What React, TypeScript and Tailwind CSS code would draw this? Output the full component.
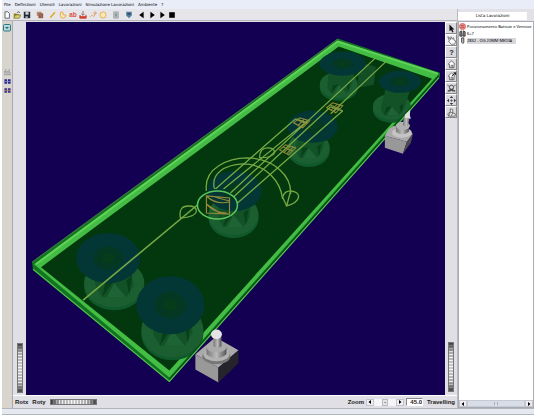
import { useState } from 'react'
import type { ReactNode } from 'react'
import clsx from 'clsx'

type Tool = { name: string; icon: ReactNode; wide?: boolean }

const menus = ['File', 'Definizioni', 'Utensili', 'Lavorazioni', 'Simulazione Lavorazioni', 'Ambiente', '?']

// All toolbar drawings share a 10x10 box
const tools: Tool[] = [
  { name: 'New', icon: <path d="M2.500 1h3.500l2 2v6h-5.500z" fill="#fff" stroke="#445" /> },
  { name: 'Open', icon: <><path d="M1 9V3h3l1 1h3v5z" fill="#8a8420" /><path d="M1 9l2-4h7L8 9z" fill="#d6d070" stroke="#5b5a20" strokeWidth=".6" /><path d="M5 2q2-2 3.500 0" fill="none" stroke="#333" /></> },
  { name: 'Save', icon: <><path d="M1 1h8v8H1z" fill="#202830" /><path d="M3 1.500h4v3H3z" fill="#d8dce4" /><path d="M3 6.500h3V9H3z" fill="#aab" /></>, wide: true },
  { name: 'Copy', icon: <><path d="M1 1h6v5H1z" fill="#b08a70" /><path d="M3 3h6v6H3z" fill="#9a5a44" /><path d="M4 4l4 4" stroke="#8a7fa0" /></>, wide: true },
  { name: 'Line', icon: <path d="M1.500 8.500l6-7" stroke="#e0a428" strokeWidth="1.800" /> },
  { name: 'Contour', icon: <path d="M2 1.500h3v3l4 1Q8 9 5 9T1.500 6z" fill="#f7e7b4" stroke="#e2a03a" /> },
  { name: 'Text', icon: <text x="5" y="8" fontSize="8" fontWeight="700" textAnchor="middle" fill="#d8523c">ab</text> },
  { name: 'Import', icon: <><path d="M5 0v5M3 3.500l2 2 2-2" stroke="#7d4f5c" fill="none" /><path d="M1 5.500v3.500h8V5.500L7 7H3z" fill="#d0402c" stroke="#d0402c" /></> },
  { name: 'Edit', icon: <><path d="M1 8l3-3 2 2 3-5" stroke="#e5a86e" fill="none" strokeWidth="1.200" /><circle cx="7.500" cy="2.500" r="1.500" fill="none" stroke="#de9b6b" /></> },
  { name: 'Circle', icon: <circle cx="5" cy="5" r="3.800" fill="#fbe9bb" stroke="#e3a238" />, wide: true },
  { name: 'Panel', icon: <><path d="M2 1h6v8H2z" fill="#b6bcc0" stroke="#a2a9ad" /><path d="M4 3h2v4H4z" fill="#7d928c" /></>, wide: true },
  { name: 'Shield', icon: <><path d="M1.500 1h7v4.500L5 9 1.500 5.500z" fill="#51819c" /><path d="M3 2.500h4v2.500H3z" fill="#3a4d70" /></>, wide: true },
  { name: 'Back', icon: <path d="M7 1v8L1.500 5z" /> },
  { name: 'Step', icon: <path d="M3 1v8L8.500 5z" /> },
  { name: 'Play', icon: <path d="M3 1v8L8.500 5z" /> },
  { name: 'Stop', icon: <path d="M1.500 1.500h7v7h-7z" /> },
]

const home = <path d="M1.500 5L5.500 1l4 4-1 .5V9.500H3V5.500zM5 9.500V6.500h2v3" fill="#fff" stroke="#333" strokeWidth=".8" />

// Viewer buttons use an 11x11 box
const viewTools: Tool[] = [
  { name: 'Select', icon: <path d="M3 .5v8.500l2-1.700 1.500 3.200 1.500-.7L6.500 6.800H9z" fill="#111" /> },
  { name: 'Rotate', icon: <path d="M1 1l2 1 1 2.500L5 1l1.500 3L8 2l.5 3 2 1-1 4H5L2 6.500l1-.5z" fill="#fff" stroke="#444" strokeWidth=".8" /> },
  { name: 'Help', icon: <text x="5.500" y="9" fontSize="9" fontWeight="700" textAnchor="middle" fill="#222">?</text> },
  { name: 'Home', icon: home },
  { name: 'Set home', icon: <>{home}<path d="M6 5l4.500-4M10.500 1v2.500M10.500 1H8" stroke="#111" fill="none" strokeWidth="1.200" /></> },
  { name: 'View all', icon: <><circle cx="5.500" cy="4" r="2.600" fill="none" stroke="#333" /><path d="M.5 1.500l2 1M10.500 1.500l-2 1M1 10l2.500-3.500h4L10 10M1 8h9M3 10l2-3M8 10L6 7" stroke="#333" strokeWidth=".8" fill="none" /></> },
  { name: 'Seek', icon: <><path d="M5.500 0l2 2.500h-4zM5.500 11l2-2.500h-4zM0 5.500l2.500-2v4zM11 5.500l-2.500-2v4z" fill="#333" /><path d="M4 5.500h3M5.500 4v3" stroke="#555" /></> },
  { name: 'Perspective', icon: <path d="M4 1l3 1v4l3 1v3H2L1 7l3-2zM4 5l3 1M2 10l2-5M7 6L5 10" fill="#eee" stroke="#444" strokeWidth=".8" /> },
]

type Cup = { x: number; y: number; rx: number; ry: number; bx: number; by: number; brx: number; bry: number }

const cups: Cup[] = [
  { x: 108, y: 258, rx: 32, ry: 25, bx: 114, by: 285, brx: 30, bry: 24 },
  { x: 170, y: 305, rx: 34, ry: 29, bx: 172, by: 332, brx: 31, bry: 27 },
  { x: 234, y: 191, rx: 27, ry: 20, bx: 233, by: 217, brx: 25, bry: 20 },
  { x: 312, y: 127, rx: 25, ry: 16, bx: 308, by: 150, brx: 21, bry: 16 },
  { x: 342, y: 64, rx: 23, ry: 12, bx: 338, by: 87, brx: 19, bry: 13 },
  { x: 399, y: 82, rx: 21, ry: 11, bx: 391, by: 109, brx: 19, bry: 13 },
]

function SuctionCup({ x, y, rx, ry, bx, by, brx, bry }: Cup) {
  return (
    <g>
      <ellipse cx={bx} cy={by + 1} rx={brx} ry={bry} fill="#10592a" />
      <ellipse cx={bx} cy={by - 2} rx={brx} ry={bry} fill="#1b5f31" />
      <path d={`M${x - rx * 0.6} ${y}L${bx - brx * 0.6} ${by + bry * 0.1}L${bx - brx * 0.4} ${by + bry * 0.5}L${bx + brx * 0.4} ${by + bry * 0.5}L${bx + brx * 0.65} ${by}L${x + rx * 0.6} ${y}z`} fill="#135227" />
      <path d={`M${bx - brx * 0.4} ${by + bry * 0.5}l${brx * 0.1} ${-bry * 0.6}l${brx * 0.3} ${-bry * 0.1}zM${bx + brx * 0.5} ${by + bry * 0.4}l${-brx * 0.1} ${-bry * 0.6}l${brx * 0.2} ${-bry * 0.2}z`} fill="#07411a" />
      <path d={`M${bx - brx * 0.25} ${by + bry * 0.5}L${bx} ${by - 2}L${bx + brx * 0.4} ${by + bry * 0.5}z`} fill="#1d6334" />
      <ellipse cx={x} cy={y} rx={rx} ry={ry} fill="#033735" />
      <ellipse cx={x} cy={y} rx={rx * 0.46} ry={ry * 0.46} fill="#043823" />
      <ellipse cx={x} cy={y} rx={rx * 0.2} ry={ry * 0.2} fill="#053c1a" />
    </g>
  )
}

function Hatch({ x, y }: { x: number; y: number }) {
  return (
    <path
      d={`M${x - 7} ${y - 1}l6-5 10 3-7 7zM${x - 4} ${y - 4}l10 4M${x - 3} ${y + 2}l7-7M${x} ${y + 3}l7-7`}
      stroke="#948c3a"
      fill="none"
    />
  )
}

function Scene() {
  return (
    <svg viewBox="26 22 418 373" preserveAspectRatio="xMidYMid slice" className="absolute inset-0 h-full w-full">
      <defs>
        <linearGradient id="metal" x1="0" x2="1">
          <stop offset="0" stopColor="#777" />
          <stop offset=".5" stopColor="#bbb" />
          <stop offset="1" stopColor="#555" />
        </linearGradient>
      </defs>
      <path d="M32 262L337 39L439 73L439 77L169 381L33 270z" fill="#127321" />
      <path d="M34 264L337 41L438 74L169 377z" fill="#43bd43" />
      <path d="M41 267L338 47L431 79L169 370z" fill="#03380e" />
      <path d="M358 62l17 5-2 18-16 3z" fill="#124f25" />
      {cups.map((cup) => <SuctionCup key={cup.x} {...cup} />)}
      <path d="M33 269L169 381L438 78" fill="none" stroke="#58c653" strokeWidth="1.200" />
      <path d="M32 262L337 39.500" fill="none" stroke="#3e7940" />
      <path d="M36 264L337 42L437 74" fill="none" stroke="#62d35a" strokeWidth="1.800" />
      <path d="M169 379L438 76" stroke="#064b10" />

      {/* milling paths */}
      <g fill="none" stroke="#76a844" strokeWidth="1.300">
        <path d="M83 300L197 205" strokeWidth="1.600" />
        <path d="M215 189L295 119M223 189L307 121M230 193L375 58M233 197L330 107M237 203L342 111M330 114L385 62" />
        <path d="M206 191C203 168 228 158 247 158C275 159 291 177 290 194M214 189C210 173 225 165 242 164C266 164 280 182 282 199" />
        <path d="M180 218Q178 206 188 206Q196 206 196 211Q195 217 180 218" />
        <path d="M286 206L282 197Q284 191 290 191Q298 192 298 197Q297 203 286 206L290 191" />
        <path d="M259 158Q259 148 267 148Q274 148 274 153Q272 158 259 158" />
        <path d="M295 119l12 4M330 107l12 4" />
      </g>
      <Hatch x={300} y={124} />
      <Hatch x={286} y={151} />
      <Hatch x={333} y={109} />
      <ellipse cx="217" cy="205" rx="20" ry="14" fill="none" stroke="#5cc65c" strokeWidth="1.500" />
      <path d="M206 196L229 198L229 214L206 213zM206 196Q215 205 229 202M206 204Q213 213 226 213M206 204L219 213M214 197L229 201" fill="none" stroke="#94883a" strokeWidth="1.200" />

      {/* clamp by the front edge */}
      <path d="M195 354L215 337L238 350L218 367z" fill="#aaa" />
      <path d="M195 354L218 367V382L195 369z" fill="#999" />
      <path d="M218 367L238 350V363L218 382z" fill="#25232b" />
      <ellipse cx="216" cy="356" rx="14" ry="8" fill="#777" />
      <ellipse cx="216" cy="354" rx="13" ry="7" fill="#b3b3b3" />
      <path d="M206 347v7q10 8 20 0v-7z" fill="url(#metal)" />
      <ellipse cx="216" cy="347" rx="10" ry="5" fill="#aaa" />
      <path d="M213 336h8v10q-4 3-8 0z" fill="url(#metal)" />
      <ellipse cx="216" cy="334" rx="5.500" ry="4.800" fill="#e4e4e4" />

      {/* clamp by the right edge */}
      <path d="M388 129L393 126L412 134L406 142L384 136z" fill="#aaa" />
      <path d="M384 136L406 142L402 154L384 148z" fill="#989898" />
      <path d="M406 142L412 134L410 143L402 154z" fill="#4c4a50" />
      <ellipse cx="401" cy="133" rx="10" ry="5" fill="#c4c4c4" />
      <path d="M395 126v6q6 5 13 0v-6z" fill="url(#metal)" />
      <ellipse cx="402" cy="126" rx="7" ry="4" fill="#b0b0b0" />
      <path d="M403 116l6 1-2 9q-3 2-5-1z" fill="url(#metal)" />
      <path d="M404 115l5-5v6l1 3-6-1z" fill="#ddd" />
    </svg>
  )
}

function ArrowButton({ name, flip }: { name: string; flip?: boolean }) {
  return (
    <button type="button" aria-label={name} className="flex h-[7px] w-2 shrink-0 items-center justify-center border border-[#c4c4cc] bg-[#f0f0f4]">
      <svg viewBox="0 0 4 4" className={clsx('size-1', flip && 'rotate-180')}><path d="M3 0v4L.5 2z" /></svg>
    </button>
  )
}

const wheel = 'appearance-none border border-[#777] [&::-webkit-slider-thumb]:size-0 [&::-webkit-slider-thumb]:appearance-none'
const verticalWheel = 'h-[50px] w-1.5 bg-[image:linear-gradient(#222c,#9990_20%,#fff6_50%,#9990_80%,#222c),repeating-linear-gradient(#aaa_0_2px,#eee_2px_3px)] [writing-mode:vertical-lr]'

export default function App() {
  const [zoom, setZoom] = useState('45.0')
  const [viewTool, setViewTool] = useState('Rotate')

  return (
    <div className="h-screen w-full bg-white pr-1 pb-1 pl-0.5 font-['Liberation_Sans',Arial,sans-serif] text-black">
      <div className="flex h-full flex-col bg-[#e1e1e7]">
        <nav className="flex h-[9px] shrink-0 items-center gap-1 bg-[#e9edf8] pl-0.5 font-['DejaVu_Sans',sans-serif] text-[4px] leading-[8px]">
          {menus.map((menu) => <button key={menu} type="button">{menu}</button>)}
        </nav>

        <div className="flex min-h-0 flex-1">
          <div className="flex min-w-0 flex-1 flex-col">
            <div className="flex h-[12px] shrink-0 items-center gap-0.5 border-b border-[#b5b5bb] bg-[#e6e5e9] pl-px">
              {tools.map((tool) => (
                <button key={tool.name} type="button" aria-label={tool.name} className={clsx('size-2 shrink-0', tool.wide && 'mr-[3px]')}>
                  <svg viewBox="0 0 10 10" className="size-full">{tool.icon}</svg>
                </button>
              ))}
            </div>

            <div className="flex min-h-0 flex-1">
              <aside className="flex w-[11px] shrink-0 flex-col items-center border-r border-[#aaa9ab] bg-[#d8d5cf] pt-[3px]">
                <button type="button" aria-label="View" className="size-2">
                  <svg viewBox="0 0 8 8" className="size-full"><rect x=".5" y=".5" width="7" height="6.500" rx="1" fill="#b8d8dc" stroke="#287982" /><path d="M2 3h4L4 5z" fill="#1d6773" /></svg>
                </button>
                <div className="mt-[37px] flex flex-col gap-0.5">
                  <button type="button" aria-label="Layers" className="size-[7px]">
                    <svg viewBox="0 0 8 8" className="size-full"><path d="M2 0v3H0M6 0v3H3M0 4.500h8M0 6.500h8" stroke="#92929c" fill="none" /></svg>
                  </button>
                  <button type="button" aria-label="Split" className="size-[7px]">
                    <svg viewBox="0 0 8 8" className="size-full"><path d="M.5 1.500h3v5h-3zM4.500 1.500h3v5h-3z" fill="#27278d" /><path d="M0 4h8" stroke="#8585c5" /></svg>
                  </button>
                  <button type="button" aria-label="Pieces" className="size-[7px]">
                    <svg viewBox="0 0 8 8" className="size-full"><path d="M.5 1.500h3v5h-3zM4.500 1.500h3v5h-3z" fill="#3b3486" /><path d="M0 4h8" stroke="#c08080" /></svg>
                  </button>
                </div>
              </aside>

              <div className="flex min-w-0 flex-1 flex-col bg-[#dfdfe5] pt-px">
                <div className="flex min-h-0 flex-1">
                  <div className="flex w-[13px] shrink-0 items-end justify-center pb-0.5">
                    <input id="rotx" type="range" className={clsx(wheel, verticalWheel)} />
                  </div>
                  <main className="relative min-w-0 flex-1 overflow-hidden bg-[#130052]"><Scene /></main>
                  <div className="flex w-[12px] shrink-0 flex-col items-center justify-between pb-[3px]">
                    <div className="flex w-full flex-col">
                      {viewTools.map((tool) => (
                        <button
                          key={tool.name}
                          type="button"
                          aria-label={tool.name}
                          onClick={() => setViewTool(tool.name)}
                          className={clsx(
                            'flex h-[12px] w-full items-center justify-center border border-t-white border-r-[#888] border-b-[#888] border-l-white',
                            viewTool === tool.name ? 'bg-[#eeeef2]' : 'bg-[#d9d9df]',
                          )}
                        >
                          <svg viewBox="0 0 11 11" className="size-[9px]">{tool.icon}</svg>
                        </button>
                      ))}
                    </div>
                    <input id="travelling" type="range" className={clsx(wheel, verticalWheel)} />
                  </div>
                </div>

                <div className="flex h-[13px] shrink-0 items-center border-t border-white pl-0.5 text-[6px] leading-[8px] font-bold text-[#222]">
                  <label htmlFor="rotx">Rotx</label>
                  <label htmlFor="roty" className="ml-1">Roty</label>
                  <input id="roty" type="range" className={clsx(wheel, 'ml-1 h-1.5 w-[47px] bg-[image:linear-gradient(90deg,#222c,#9990_20%,#fff6_50%,#9990_80%,#222c),repeating-linear-gradient(90deg,#aaa_0_2px,#eee_2px_3px)]')} />
                  <div className="ml-auto flex items-center">
                    <label htmlFor="zoom">Zoom</label>
                    <div className="ml-0.5 flex w-[38px] items-center justify-between bg-[#f5f5f8]">
                      <ArrowButton name="Zoom out" />
                      <button type="button" aria-label="Zoom position" className="h-[7px] w-1.5 border border-[#bbb] bg-[#e4e4ea] text-[5px] leading-[4px]">-</button>
                      <ArrowButton name="Zoom in" flip />
                    </div>
                    <input
                      id="zoom"
                      value={zoom}
                      onChange={(e) => setZoom(e.target.value)}
                      className="ml-0.5 h-2 w-[17px] border border-t-[#888] border-r-white border-b-white border-l-[#888] bg-white text-right"
                    />
                    <label htmlFor="travelling" className="mr-0.5 ml-1">Travelling</label>
                  </div>
                </div>
              </div>
            </div>
          </div>

          <section className="flex w-[77px] shrink-0 flex-col border-l border-[#b8b8be] pt-[3px]">
            <h2 className="mr-[7px] h-[8px] shrink-0 bg-white text-center font-['DejaVu_Sans',sans-serif] text-[4px] leading-[8px]">Lista Lavorazioni</h2>
            <div className="mt-px flex min-h-0 flex-1 flex-col border border-[#aaaab2] bg-white">
              <ul className="flex-1 pt-px font-['Noto_Sans',sans-serif] text-[4px] leading-[6px] whitespace-nowrap">
                <li className="flex items-center gap-px">
                  <svg viewBox="0 0 8 8" className="size-[7px] shrink-0"><circle cx="4" cy="4" r="3.500" fill="#e5938d" stroke="#d26762" /><path d="M2 3h4M2 5h4" stroke="#b54d4d" /></svg>
                  Posizionamento Battute e Ventose
                </li>
                <li className="flex items-center gap-px">
                  <svg viewBox="0 0 8 8" className="size-[7px] shrink-0"><path d="M1 2l2-1 .5 6H1zM5 1l2 1v5H4.500z" fill="#888" stroke="#333" /></svg>
                  6+7
                </li>
                <li className="flex items-center gap-px">
                  <svg viewBox="0 0 8 8" className="size-[7px] shrink-0"><path d="M3 1h2.500v5L4.500 7.500 3 6z" fill="#ccc" stroke="#333" /></svg>
                  <span className="bg-[#d8d8dc] pr-1">2832 - OG 20MM MEDIA</span>
                </li>
              </ul>
              <div className="flex h-[7px] shrink-0 items-center bg-[#dfe2ec]">
                <ArrowButton name="Scroll left" />
                <div className="flex h-[7px] flex-1 items-center justify-center border border-[#c6cad6] bg-[#d9dde8]">
                  <span className="h-[3px] w-1 border-x border-[#a8adba]" />
                </div>
                <ArrowButton name="Scroll right" flip />
              </div>
            </div>
          </section>
        </div>

        <footer className="h-[7px] shrink-0 border-y border-[#b3b5bd] bg-[#e6e8ef]" />
      </div>
    </div>
  )
}
